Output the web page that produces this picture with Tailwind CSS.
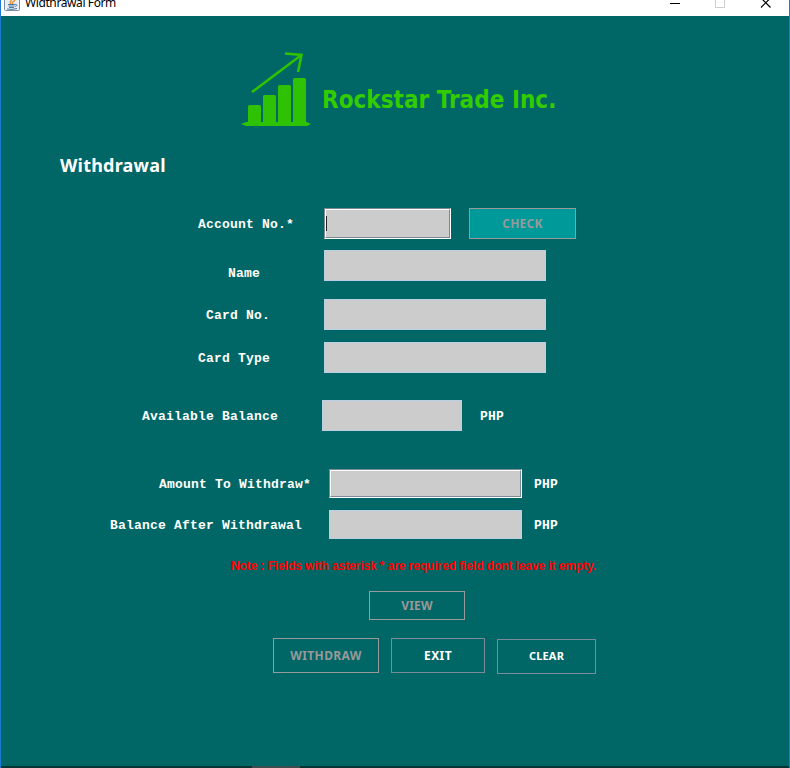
<!DOCTYPE html>
<html lang="en">
<head>
<meta charset="utf-8">
<title>Widthrawal Form</title>
<script src="https://cdn.jsdelivr.net/npm/@tailwindcss/browser@4"></script>
</head>
<body class="w-[790px] h-[768px] overflow-hidden bg-[#006766]">
<div class="w-[790px] h-[768px] overflow-hidden flex flex-col border-x border-[#1b7bd2] font-['Liberation_Mono',monospace] text-[13px] leading-[16px] tracking-[0.2px] font-bold text-white">
  <header class="h-[16px] shrink-0 bg-white flex items-start overflow-hidden text-black font-normal">
    <svg class="ml-[3px] shrink-0" width="16" height="11" viewBox="0 0 16 11">
      <rect x=".5" y="-5" width="15" height="15.5" rx="1" fill="#e9eef3" stroke="#7790a8"/>
      <path d="M7 4C4 2 9 1 7-2M9 4C7 2 10 2 11 0" fill="none" stroke="#ed8b2e" stroke-width="1.3"/>
      <path d="M4 4.5h7M4.5 6h6M5 7.5h5M3 9q5 1 10-.5M11 4.5c3-.5 2 2 0 2" fill="none" stroke="#4d79a4"/>
    </svg>
    <span class="ml-[5px] -mt-[6px] font-['Noto_Sans',sans-serif] text-[12px] tracking-[-0.400px] leading-[17px] whitespace-nowrap">Widthrawal Form</span>
    <svg class="ml-auto mr-[16px]" width="104" height="10" viewBox="0 0 104 10" fill="none">
      <path d="M1 3.5h10" stroke="#000"/><path d="M46.500-2v9.500h9V-2" stroke="#ccc"/>
      <path d="M92-2l9.500 9.500M101.500-2L92 7.500" stroke="#000" stroke-width="1.2"/>
    </svg>
  </header>
  <div class="mt-[34px] h-[80px] flex shrink-0">
    <svg class="ml-[239px] shrink-0" width="72" height="80" viewBox="0 0 72 80">
      <g fill="#2fc103"><rect x="8" y="55" width="13" height="20" rx="1.500"/><rect x="23" y="45" width="13" height="30" rx="1.500"/><rect x="38" y="35" width="13" height="40" rx="1.500"/><rect x="53" y="28" width="13" height="47" rx="1.500"/><path d="M1 74L6 72H67L71 74 67 76H6Z"/></g>
      <path d="M12 42L60 6M45 3.500L61.500 5 58 22" fill="none" stroke="#2fc103" stroke-width="2.600"/>
      <circle cx="16" cy="77" r="1.500" fill="#087451"/>
    </svg>
    <h1 class="ml-[10px] mt-[35px] font-['DejaVu_Sans_Condensed','DejaVu_Sans',sans-serif] [font-stretch:condensed] text-[24px] leading-[30px] tracking-[0.030px] text-[#33cc00] whitespace-nowrap">Rockstar Trade Inc.</h1>
  </div>
  <h2 class="ml-[59px] mt-[23px] h-[25px] shrink-0 font-['Noto_Sans',sans-serif] text-[18px] leading-[24px] tracking-[0.200px]">Withdrawal</h2>
  <div class="mt-[30px] h-[31px] shrink-0 flex items-center whitespace-nowrap">
    <label class="pl-[197px] w-[323px] pt-[2px]">Account No.*</label>
    <div class="w-[127px] h-[31px] border border-t-[#7a8a99] border-l-[#7a8a99] border-white"><div class="h-full bg-[#ccc] border border-t-white border-l-white border-[#7a8a99] flex items-center"><i class="w-px h-[15px] bg-[#222]"></i></div></div>
    <button class="ml-[18px] w-[107px] h-[31px] bg-[#009999] border border-[#999] text-[#999] font-['Noto_Sans',sans-serif] text-[12px] tracking-[0.250px]">CHECK</button>
  </div>
  <div class="mt-[11px] h-[31px] shrink-0 flex items-center">
    <label class="pl-[227px] w-[323px] pt-[17px]">Name</label>
    <div class="w-[222px] h-[31px] bg-[#ccc] border border-[#b8cfe5]"></div>
  </div>
  <div class="mt-[18px] h-[31px] shrink-0 flex items-center">
    <label class="pl-[205px] w-[323px] pt-[2px]">Card No.</label>
    <div class="w-[222px] h-[31px] bg-[#ccc] border border-[#b8cfe5]"></div>
  </div>
  <div class="mt-[12px] h-[31px] shrink-0 flex items-center">
    <label class="pl-[197px] w-[323px] pt-[2px]">Card Type</label>
    <div class="w-[222px] h-[31px] bg-[#ccc] border border-[#b8cfe5]"></div>
  </div>
  <div class="mt-[27px] h-[31px] shrink-0 flex items-center">
    <label class="pl-[141px] w-[321px] pt-[2px]">Available Balance</label>
    <div class="w-[140px] h-[31px] bg-[#ccc] border border-[#b8cfe5]"></div>
    <span class="ml-[18px] pt-[2px]">PHP</span>
  </div>
  <div class="mt-[38px] h-[29px] shrink-0 flex items-center">
    <label class="pl-[158px] w-[328px] pt-[2px]">Amount To Withdraw*</label>
    <div class="w-[193px] h-[29px] border border-t-[#7a8a99] border-l-[#7a8a99] border-white"><div class="h-full bg-[#ccc] border border-t-white border-l-white border-[#7a8a99]"></div></div>
    <span class="ml-[12px] pt-[2px]">PHP</span>
  </div>
  <div class="mt-[12px] h-[29px] shrink-0 flex items-center">
    <label class="pl-[109px] w-[328px] pt-[2px]">Balance After Withdrawal</label>
    <div class="w-[193px] h-[29px] bg-[#ccc] border border-[#b8cfe5]"></div>
    <span class="ml-[12px] pt-[2px]">PHP</span>
  </div>
  <p class="ml-[230px] mt-[19px] h-[16px] shrink-0 font-['Liberation_Sans',sans-serif] text-[12px] tracking-[-0.090px] text-[#f00] whitespace-nowrap">Note : Fields with asterisk * are required field dont leave it empty.</p>
  <button class="ml-[368px] mt-[17px] w-[96px] h-[29px] shrink-0 border border-[#999] text-[#999] font-['Noto_Sans',sans-serif] text-[12px] tracking-[0.200px]">VIEW</button>
  <div class="ml-[272px] mt-[18px] flex shrink-0 gap-[12px] font-['Noto_Sans',sans-serif] text-[12px] tracking-[0.400px]">
    <button class="w-[106px] h-[35px] border border-[#999] text-[#999]">WITHDRAW</button>
    <button class="w-[94px] h-[35px] border border-[#7a8a99]">EXIT</button>
    <button class="mt-px w-[99px] h-[35px] pb-[2px] border border-[#7a8a99] text-[11px] tracking-[0.200px]">CLEAR</button>
  </div>
  <div class="mt-auto h-[2px] shrink-0 bg-[#073534]"><div class="ml-[251px] w-[48px] h-full bg-[#3d4d4d]"></div></div>
</div>
</body>
</html>
